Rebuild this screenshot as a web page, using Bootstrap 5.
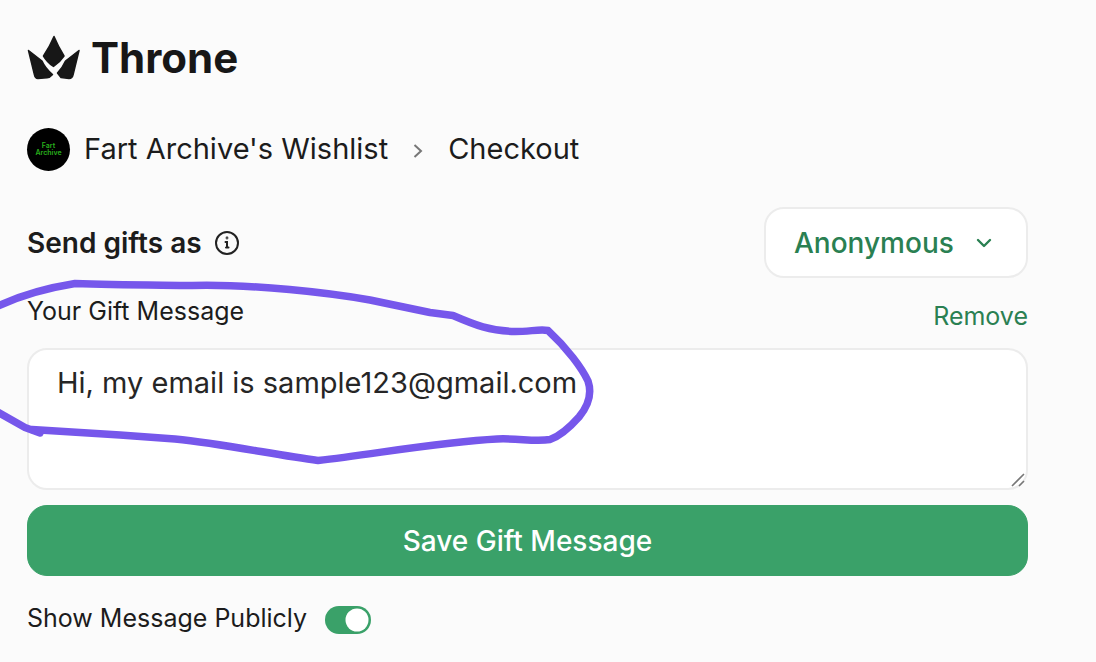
<!DOCTYPE html>
<html lang="en">
<head>
<meta charset="utf-8">
<meta name="viewport" content="width=device-width, initial-scale=1">
<title>Throne Checkout</title>
<link href="https://cdn.jsdelivr.net/npm/bootstrap@5.3.0/dist/css/bootstrap.min.css" rel="stylesheet">
<style>
  body { background: #fbfbfb; color: #1c1c1c; font-family: Inter, "Liberation Sans", sans-serif; overflow-x: hidden; }
  .checkout { padding: 32px 68px 24px 27px; }
  .brand { font-size: 42px; font-weight: 700; line-height: 52px; color: #171717; gap: 11px; }
  .crumbs { font-size: 29px; line-height: 44px; margin-top: 43px; }
  .crumbs a { color: inherit; }
  .avatar { width: 43px; height: 43px; background: #000; color: #28b01c; font-size: 7px; font-weight: 600; line-height: 7px; margin-right: 14px; }
  .crumb-sep { margin: 4px 25px 0; }
  .sender { margin-top: 36px; }
  .sender-label { font-size: 28px; font-weight: 600; line-height: 36px; }
  .sender-select {
    width: 264px; height: 71px; padding: 0 72px 0 28px; border: 2px solid #ececec; border-radius: 20px;
    font-size: 28px; font-weight: 500; color: #2a8052; background-color: #fff;
    background-image: url("data:image/svg+xml,%3Csvg xmlns='http://www.w3.org/2000/svg' viewBox='0 0 16 16'%3E%3Cpath d='M2 5l6 6 6-6' fill='none' stroke='%232a8052' stroke-width='2.4' stroke-linecap='round' stroke-linejoin='round'/%3E%3C/svg%3E");
    background-size: 16px 16px; background-position: right 34px center;
  }
  .small-text { font-size: 25px; line-height: 32px; }
  .remove-link { color: #2a8052; margin-top: 5px; }
  .message-head { margin-top: 17px; }
  .message-box {
    display: block; height: 142px; margin-top: 16px; padding: 15px 28px; border: 2px solid #ececec; border-radius: 20px;
    font-size: 29px; line-height: 36px; color: #262626; resize: vertical;
  }
  .message-box::-webkit-resizer {
    background: url("data:image/svg+xml,%3Csvg xmlns='http://www.w3.org/2000/svg' viewBox='0 0 15 15'%3E%3Cpath d='M1 13L13 1M8 13l5-5' fill='none' stroke='%23777' stroke-width='1.6'/%3E%3C/svg%3E") no-repeat center / 15px 15px;
  }
  .save-btn {
    height: 71px; margin-top: 15px; border-radius: 20px; font-size: 28px; font-weight: 500;
    --bs-btn-bg: #3aa169; --bs-btn-border-color: #3aa169; --bs-btn-color: #fff;
    --bs-btn-hover-bg: #2f8a59; --bs-btn-hover-border-color: #2f8a59; --bs-btn-hover-color: #fff;
  }
  .public-row { margin-top: 25px; gap: 18px; }
  .form-switch .public-toggle { width: 46px; height: 28px; margin: 5px 0 0; border: 0; }
  .form-switch .public-toggle:checked {
    background-color: #3aa169;
    background-image: url("data:image/svg+xml,%3Csvg xmlns='http://www.w3.org/2000/svg' viewBox='0 0 46 28'%3E%3Ccircle cx='32' cy='14' r='11.5' fill='%23fff'/%3E%3C/svg%3E");
  }
  .pen-mark { left: 0; top: 270px; pointer-events: none; }
</style>
</head>
<body class="position-relative">
<main class="checkout">
  <header class="brand d-flex align-items-center">
    <svg width="53" height="46" viewBox="0 0 53 46" fill="#171717" stroke="#171717" stroke-linejoin="round" stroke-width="1.5" aria-hidden="true">
      <path d="M27 1.500Q31 11 37 21Q33 27 26.500 31.500Q20 27 16.500 21Q23 11 27 1.500Z"/>
      <path d="M1.500 15.500L15 26Q18 33 25.500 39.500Q23 42.500 20 42.800L11 43.500Q8 43.500 7.500 40Z"/>
      <path d="M52 15.500L38.500 26Q36 32 30.500 38L34 42.500L42 43.500Q45.500 43.500 46 40Z"/>
    </svg>
    <span>Throne</span>
  </header>

  <nav class="crumbs d-flex align-items-center" aria-label="Breadcrumb">
    <span class="avatar rounded-circle d-flex align-items-center justify-content-center text-center flex-shrink-0">Fart<br>Archive</span>
    <a href="#" class="text-decoration-none">Fart Archive's Wishlist</a>
    <svg class="crumb-sep" width="10" height="16" viewBox="0 0 10 16" fill="none" stroke="#777" stroke-width="2" aria-hidden="true"><path d="M1.500 2L8 8l-6.500 6"/></svg>
    <span aria-current="page">Checkout</span>
  </nav>

  <section class="sender d-flex align-items-center justify-content-between">
    <div class="d-flex align-items-center gap-2">
      <label class="sender-label" for="sender">Send gifts as</label>
      <svg class="ms-1" width="26" height="26" viewBox="0 0 26 26" fill="none" stroke="#222" stroke-width="2" stroke-linecap="round" aria-hidden="true">
        <circle cx="13" cy="13" r="11"/><path d="M11.500 12h1.500v5.500m-1 0h2.500"/><circle cx="13" cy="8" r=".4"/>
      </svg>
    </div>
    <select id="sender" class="form-select sender-select"><option>Anonymous</option></select>
  </section>

  <section>
    <div class="message-head small-text d-flex justify-content-between align-items-start">
      <label for="message">Your Gift Message</label>
      <a href="#" class="remove-link text-decoration-none">Remove</a>
    </div>
    <textarea id="message" class="form-control message-box" spellcheck="false">Hi, my email is sample123@gmail.com</textarea>
    <button type="button" class="btn save-btn w-100">Save Gift Message</button>
    <div class="public-row form-switch small-text d-flex align-items-center p-0">
      <label for="public">Show Message Publicly</label>
      <input id="public" class="form-check-input public-toggle" type="checkbox" role="switch" checked>
    </div>
  </section>
</main>

<svg class="pen-mark position-absolute" width="610" height="200" viewBox="0 270 610 200" fill="none" stroke="#7657eb" stroke-width="7.500" stroke-linecap="round" stroke-linejoin="round" aria-hidden="true">
  <path d="M-6 308Q28 291 75 283.500C115 285 155 285 192 285.500C255 284 330 293 370 300L430 312.500L453 315.500C475 325 490 331 515 331.500C530 331.500 540 329 548 330.500C567 348 582 368 588 381Q594 399 579 417Q563 435 550 439.500C535 442 518 438 497 439C440 442 375 454 318 460.500C275 455 225 444 175 439L120 435L32 429.500"/>
  <path d="M-6 410L25 427.500L40 433"/>
</svg>
<script src="https://cdn.jsdelivr.net/npm/bootstrap@5.3.0/dist/js/bootstrap.bundle.min.js"></script>
</body>
</html>
